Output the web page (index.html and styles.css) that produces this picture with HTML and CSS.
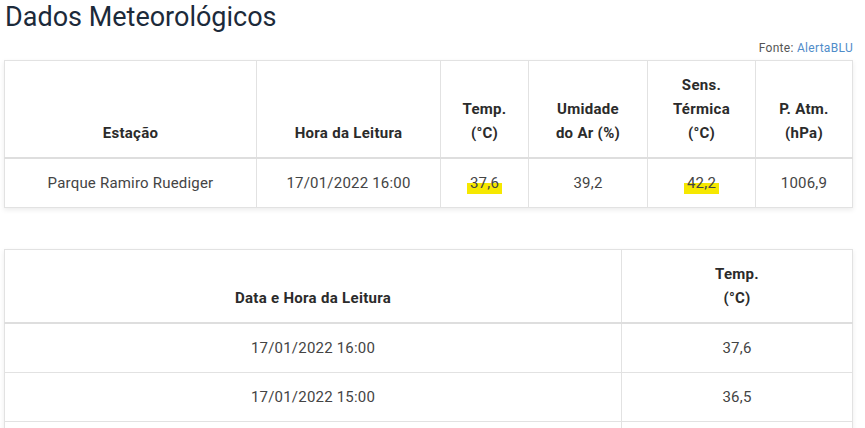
FILE: index.html
```html
<!DOCTYPE html>
<html lang="pt-BR">
<head>
    <meta charset="UTF-8">
    <meta name="viewport" content="width=device-width, initial-scale=1.0">
    <title>Dados Meteorológicos</title>
    <link rel="stylesheet" href="styles.css">
</head>
<body>

    <h1 class="page-title">Dados Meteorológicos</h1>
    <p class="source">Fonte: <a href="#">AlertaBLU</a></p>

    <table class="data-table station-table">
        <thead>
            <tr>
                <th class="col-station">Estação</th>
                <th class="col-time">Hora da Leitura</th>
                <th class="col-temp">Temp.<br>(°C)</th>
                <th class="col-humidity">Umidade<br>do Ar (%)</th>
                <th class="col-feel">Sens.<br>Térmica<br>(°C)</th>
                <th class="col-pressure">P. Atm.<br>(hPa)</th>
            </tr>
        </thead>
        <tbody>
            <tr>
                <td>Parque Ramiro Ruediger</td>
                <td>17/01/2022 16:00</td>
                <td><span class="highlight">37,6</span></td>
                <td>39,2</td>
                <td><span class="highlight">42,2</span></td>
                <td>1006,9</td>
            </tr>
        </tbody>
    </table>

    <table class="data-table history-table">
        <thead>
            <tr>
                <th class="col-datetime">Data e Hora da Leitura</th>
                <th>Temp.<br>(°C)</th>
            </tr>
        </thead>
        <tbody>
            <tr>
                <td>17/01/2022 16:00</td>
                <td>37,6</td>
            </tr>
            <tr>
                <td>17/01/2022 15:00</td>
                <td>36,5</td>
            </tr>
            <tr>
                <td>17/01/2022 14:00</td>
                <td>36,1</td>
            </tr>
        </tbody>
    </table>

</body>
</html>
```

FILE: styles.css
```css
body {
    margin: 0;
    padding: 0 12px 0 4px;
    font-family: Roboto, "Liberation Sans", sans-serif;
    color: #444;
    background: white;
}

.page-title {
    margin: 0;
    padding-left: 1px;
    font-size: 27px;
    font-weight: 400;
    line-height: 34px;
    color: #1c2a3a;
}

.source {
    margin: 7px 0 5px;
    text-align: right;
    font-size: 12px;
    line-height: 14px;
    letter-spacing: 0.3px;
    color: #555;
}
.source a { color: #4f8cc9; text-decoration: none; }

/* Tables */
.data-table {
    width: 100%;
    table-layout: fixed;
    border-collapse: collapse;
    border: 1px solid #e2e2e2;
    box-shadow: 0 2px 5px rgba(0, 0, 0, 0.08);
    font-size: 15px;
    line-height: 24px;
    text-align: center;
}
.data-table th,
.data-table td {
    padding: 12px 4px;
    border: 1px solid #e2e2e2;
}
.data-table th {
    vertical-align: bottom;
    font-weight: 700;
    letter-spacing: 0.3px;
    color: #2b2b2b;
    border-bottom: 2px solid #dedede;
}
.data-table td {
    letter-spacing: 0.2px;
    color: #444;
}

.col-station { width: 243px; }
.col-time { width: 175px; }
.col-temp { width: 79px; }
.col-humidity { width: 110px; }
.col-feel { width: 99px; }

.history-table { margin-top: 41px; }
.col-datetime { width: 608px; }

.highlight {
    padding: 0 3px 2px;
    background: linear-gradient(transparent 45%, #f6e800 45%);
}
```
